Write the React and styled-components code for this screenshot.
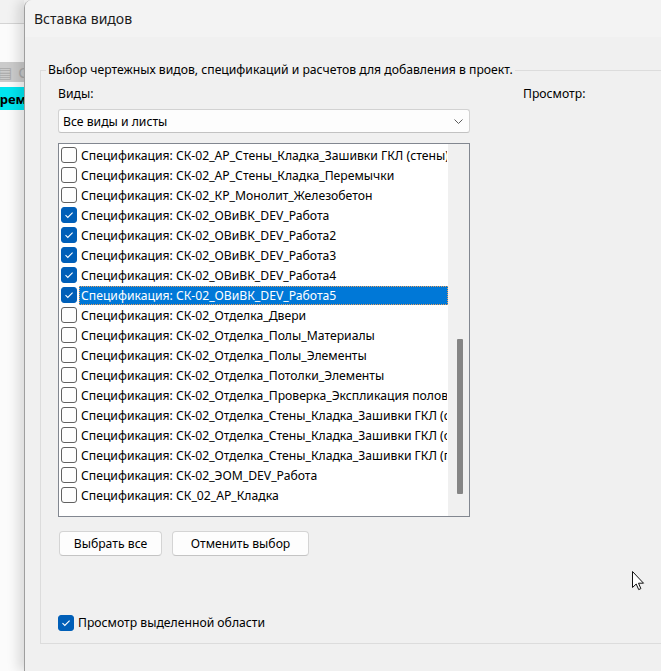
import React from 'react';
import styled, { createGlobalStyle } from 'styled-components';

const GlobalStyle = createGlobalStyle`
  html, body {
    margin: 0;
    padding: 0;
    width: 661px;
    height: 671px;
    overflow: hidden;
    background: #fbfbfb;
  }
  body {
    font-family: "Noto Sans", "DejaVu Sans", sans-serif;
    font-size: 12.2px;
    color: #000;
  }
`;

const Screen = styled.div`
  position: relative;
  display: flex;
  width: 661px;
  height: 671px;
  overflow: hidden;
`;

// Part of the application window behind the dialog
const BackApp = styled.div`
  width: 24px;
  flex-shrink: 0;
  display: flex;
  flex-direction: column;
  background: #fbfbfb;
  overflow: hidden;
`;

const BackHeader = styled.div`
  height: 23px;
  background: #f2f2f2;
  border-bottom: 1px solid #d4d4d4;
`;

const BackToolbar = styled.div`
  margin-top: 38px;
  height: 20px;
  background: #cbcbcb;
  display: flex;
  align-items: center;
  gap: 6px;
  color: #a9a9a9;
  font-size: 15px;
  white-space: nowrap;
  margin-left: -2px;
`;

const BackCell = styled.div`
  margin-top: 5px;
  height: 23px;
  background: #00e6f0;
  display: flex;
  align-items: center;
  font-weight: bold;
  font-size: 13px;
  white-space: nowrap;
  text-indent: -8px;
`;

const Dialog = styled.div`
  flex: 1;
  min-width: 0;
  display: flex;
  flex-direction: column;
  background: #f0f0f0;
  border-left: 1px solid #9e9e9e;
  border-top-left-radius: 8px;
  box-shadow: -6px 0 12px rgba(0, 0, 0, 0.13);
  overflow: hidden;
`;

const TitleBar = styled.div`
  height: 37px;
  flex-shrink: 0;
  display: flex;
  align-items: center;
  padding-left: 9px;
  background: #f3f3f3;
  font-size: 14px;
  color: #1b1b1b;
`;

const Group = styled.fieldset`
  margin: 25px -40px 0 15px;
  padding: 0 0 12px 5px;
  border: 1px solid #dcdcdc;
  min-width: 0;
`;

const Legend = styled.legend`
  padding: 0 2px;
  line-height: 16px;
`;

const GroupBody = styled.div`
  display: grid;
  grid-template-columns: 412px auto;
  column-gap: 53px;
  padding: 8px 0 0 12px;
`;

const Column = styled.div`
  display: flex;
  flex-direction: column;
`;

const Caption = styled.div`
  line-height: 16px;
  height: 16px;
`;

const Combo = styled.div`
  margin-top: 7px;
  height: 22px;
  display: flex;
  align-items: center;
  justify-content: space-between;
  padding: 0 6px 0 4px;
  background: #fdfdfd;
  border: 1px solid #d2d2d2;
  border-bottom-color: #c2c2c2;
  border-radius: 3px;
`;

const ListBox = styled.div`
  margin-top: 10px;
  height: 372px;
  display: flex;
  background: #fff;
  border: 1px solid #828790;
`;

const Rows = styled.div`
  flex: 1;
  min-width: 0;
  padding-top: 1px;
  display: flex;
  flex-direction: column;
`;

const Row = styled.div`
  height: 20px;
  display: flex;
  align-items: center;
  padding-left: 2px;
  gap: 2px;
`;

const RowLabel = styled.div`
  flex: 1;
  min-width: 0;
  height: 17px;
  line-height: 17px;
  padding-left: 1px;
  white-space: nowrap;
  overflow: hidden;
  border: 1px dotted ${(p) => (p.$selected ? '#e8a060' : 'transparent')};
  background: ${(p) => (p.$selected ? '#0078d7' : 'transparent')};
  color: ${(p) => (p.$selected ? '#fff' : '#000')};
`;

const ScrollTrack = styled.div`
  width: 21px;
  flex-shrink: 0;
  background: #f0f0f0;
  display: flex;
  flex-direction: column;
  align-items: center;
`;

const ScrollThumb = styled.div`
  width: 6px;
  margin-left: 2px;
  margin-top: ${(p) => p.$offset}px;
  height: ${(p) => p.$size}px;
  background: #858585;
  border-radius: 1px;
`;

const BoxFrame = styled.span`
  width: 16px;
  height: 16px;
  flex-shrink: 0;
  box-sizing: border-box;
  border-radius: 3px;
  display: flex;
  align-items: center;
  justify-content: center;
  border: 1px solid ${(p) => (p.$checked ? '#005fb8' : '#616161')};
  background: ${(p) => (p.$checked ? '#005fb8' : '#fdfdfd')};
`;

const Buttons = styled.div`
  margin-top: 14px;
  display: flex;
  gap: 10px;
  padding-left: 1px;
`;

const Button = styled.button`
  width: ${(p) => p.$width}px;
  height: 25px;
  padding: 0;
  font-family: inherit;
  font-size: 12.2px;
  color: #000;
  background: #fdfdfd;
  border: 1px solid #d4d4d4;
  border-bottom-color: #c4c4c4;
  border-radius: 4px;
`;

const OptionRow = styled.label`
  margin-top: 59px;
  display: flex;
  align-items: center;
  gap: 4px;
  height: 16px;
  line-height: 16px;
`;

const Cursor = styled.svg`
  position: absolute;
  left: 632px;
  top: 571px;
`;

const Check = ({ checked }) => (
  <BoxFrame $checked={checked}>
    {checked && (
      <svg width="10" height="8" viewBox="0 0 10 8">
        <path d="M1.5 4.2 L3.8 6.4 L8.6 1.6" fill="none" stroke="#fff" strokeWidth="1.1" />
      </svg>
    )}
  </BoxFrame>
);

const items = [
  { name: 'СК-02_АР_Стены_Кладка_Зашивки ГКЛ (стены)', checked: false },
  { name: 'СК-02_АР_Стены_Кладка_Перемычки', checked: false },
  { name: 'СК-02_КР_Монолит_Железобетон', checked: false },
  { name: 'СК-02_ОВиВК_DEV_Работа', checked: true },
  { name: 'СК-02_ОВиВК_DEV_Работа2', checked: true },
  { name: 'СК-02_ОВиВК_DEV_Работа3', checked: true },
  { name: 'СК-02_ОВиВК_DEV_Работа4', checked: true },
  { name: 'СК-02_ОВиВК_DEV_Работа5', checked: true, selected: true },
  { name: 'СК-02_Отделка_Двери', checked: false },
  { name: 'СК-02_Отделка_Полы_Материалы', checked: false },
  { name: 'СК-02_Отделка_Полы_Элементы', checked: false },
  { name: 'СК-02_Отделка_Потолки_Элементы', checked: false },
  { name: 'СК-02_Отделка_Проверка_Экспликация полов', checked: false },
  { name: 'СК-02_Отделка_Стены_Кладка_Зашивки ГКЛ (стены)', checked: false },
  { name: 'СК-02_Отделка_Стены_Кладка_Зашивки ГКЛ (откосы)', checked: false },
  { name: 'СК-02_Отделка_Стены_Кладка_Зашивки ГКЛ (потолки)', checked: false },
  { name: 'СК-02_ЭОМ_DEV_Работа', checked: false },
  { name: 'СК_02_АР_Кладка', checked: false },
];

export default function App() {
  return (
    <Screen>
      <GlobalStyle />
      <BackApp>
        <BackHeader />
        <BackToolbar>
          <span>▤</span>
          <span>Сп</span>
        </BackToolbar>
        <BackCell>время</BackCell>
      </BackApp>

      <Dialog>
        <TitleBar>Вставка видов</TitleBar>
        <Group>
          <Legend>Выбор чертежных видов, спецификаций и расчетов для добавления в проект.</Legend>
          <GroupBody>
            <Column>
              <Caption>Виды:</Caption>
              <Combo>
                <span>Все виды и листы</span>
                <svg width="9" height="5" viewBox="0 0 9 5">
                  <path d="M0.5 0.5 L4.5 4.5 L8.5 0.5" fill="none" stroke="#5c5c5c" strokeWidth="1" />
                </svg>
              </Combo>
              <ListBox>
                <Rows>
                  {items.map((it) => (
                    <Row key={it.name}>
                      <Check checked={it.checked} />
                      <RowLabel $selected={it.selected}>Спецификация: {it.name}</RowLabel>
                    </Row>
                  ))}
                </Rows>
                <ScrollTrack>
                  <ScrollThumb $offset={195} $size={155} />
                </ScrollTrack>
              </ListBox>
              <Buttons>
                <Button $width={103}>Выбрать все</Button>
                <Button $width={137}>Отменить выбор</Button>
              </Buttons>
              <OptionRow>
                <Check checked />
                <span>Просмотр выделенной области</span>
              </OptionRow>
            </Column>
            <Column>
              <Caption>Просмотр:</Caption>
            </Column>
          </GroupBody>
        </Group>
      </Dialog>

      <Cursor width="13" height="20" viewBox="0 0 13 20">
        <path
          d="M0.5 0.5 L0.5 16.5 L4.2 13 L6.7 18.6 L8.9 17.6 L6.5 12.2 L11.5 12.2 Z"
          fill="#fff"
          stroke="#111"
          strokeWidth="1"
          strokeLinejoin="round"
        />
      </Cursor>
    </Screen>
  );
}
